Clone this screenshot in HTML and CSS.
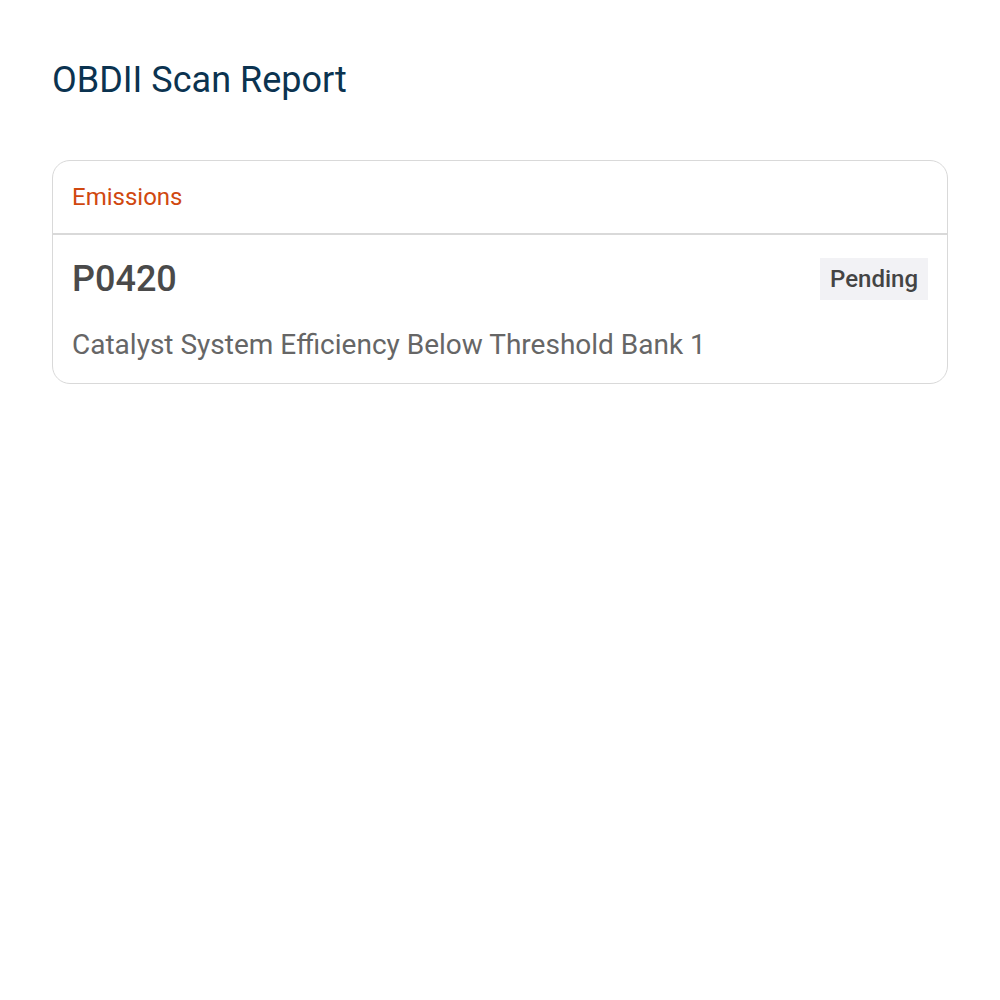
FILE: index.html
```html
<!DOCTYPE html>
<html lang="en">
<head>
<meta charset="utf-8">
<title>OBDII Scan Report</title>
<link rel="stylesheet" href="styles.css">
</head>
<body>
<main class="page">
  <h1 class="title">OBDII Scan Report</h1>
  <section class="card">
    <header class="card-head">Emissions</header>
    <div class="card-body">
      <div class="code-row">
        <span class="code">P0420</span>
        <span class="badge">Pending</span>
      </div>
      <p class="desc">Catalyst System Efficiency Below Threshold Bank 1</p>
    </div>
  </section>
</main>
</body>
</html>
```

FILE: styles.css
```css
* { box-sizing: border-box; }
html, body { margin: 0; background: #fff; }
body { font-family: Roboto, "Noto Sans", sans-serif; }

.page { padding: 56px 52px; }

.title {
  margin: 0 0 56px;
  font-size: 36px;
  font-weight: 400;
  line-height: 48px;
  color: #0b3350;
}

.card {
  border: 1px solid #d9d9d9;
  border-radius: 18px;
  overflow: hidden;
}

.card-head {
  padding: 22px 19px 22px;
  font-size: 24px;
  line-height: 28px;
  color: #d0480f;
  border-bottom: 2px solid #d9d9d9;
}

.card-body { padding: 23px 19px 21px; }

.code-row {
  display: flex;
  align-items: center;
  justify-content: space-between;
}

.code {
  font-size: 36px;
  font-weight: 500;
  color: #4a4a4a;
  line-height: 42px;
}

.badge {
  background: #f2f2f5;
  color: #444;
  font-size: 24px;
  font-weight: 500;
  line-height: 42px;
  padding: 0 10px;
}

.desc {
  margin: 28px 0 0;
  font-size: 28px;
  line-height: 34px;
  color: #666;
}
```
